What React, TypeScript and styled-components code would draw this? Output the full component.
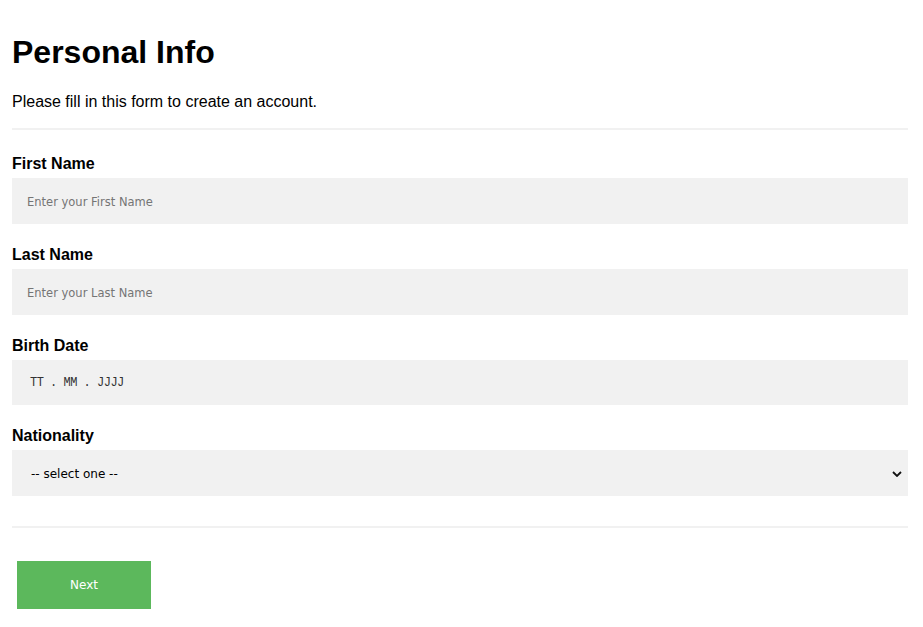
import React from "react";
import styled, { createGlobalStyle } from "styled-components";

const Global = createGlobalStyle`
  html, body { margin: 0; background: #fff; }
  body { font-family: "Liberation Sans", Arial, sans-serif; color: #000; }
  * { box-sizing: border-box; }
`;

const fields = [
  { label: "First Name", placeholder: "Enter your First Name" },
  { label: "Last Name", placeholder: "Enter your Last Name" },
];

export default function App() {
  return (
    <>
      <Global />
      <Page>
        <Title>Personal Info</Title>
        <Intro>Please fill in this form to create an account.</Intro>
        <Rule />
        <Fields>
          {fields.map((f) => (
            <Field key={f.label}>
              <Label>{f.label}</Label>
              <TextInput type="text" placeholder={f.placeholder} />
            </Field>
          ))}
          <Field>
            <Label>Birth Date</Label>
            <DateBox>TT . MM . JJJJ</DateBox>
          </Field>
          <Field>
            <Label>Nationality</Label>
            <SelectWrap>
              <Select defaultValue="">
                <option value="">-- select one --</option>
                <option value="de">German</option>
                <option value="at">Austrian</option>
                <option value="ch">Swiss</option>
              </Select>
              <Chevron viewBox="0 0 10 6" width="10" height="6">
                <path d="M1 1l4 4 4-4" fill="none" stroke="#111" strokeWidth="1.8" />
              </Chevron>
            </SelectWrap>
          </Field>
        </Fields>
        <Rule $gap={30} />
        <NextButton type="button">Next</NextButton>
      </Page>
    </>
  );
}

let Page = styled.div`
  padding: 34px 15px 20px 12px;
  display: flex;
  flex-direction: column;
`;

let Title = styled.h1`
  margin: 0;
  font-size: 32px;
  line-height: 37px;
  font-weight: 700;
`;

let Intro = styled.p`
  margin: 22px 0 0;
  font-size: 16px;
  line-height: 18px;
`;

let Rule = styled.hr<{ $gap?: number }>`
  margin: ${({ $gap }) => $gap ?? 17}px 0 0;
  height: 2px;
  border: none;
  background: #f1f1f1;
`;

let Fields = styled.div`
  display: flex;
  flex-direction: column;
  gap: 22px;
  margin-top: 25px;
`;

let Field = styled.div`
  display: flex;
  flex-direction: column;
  gap: 5px;
`;

let Label = styled.label`
  font-size: 16px;
  line-height: 18px;
  font-weight: 700;
`;

let TextInput = styled.input`
  height: 46px;
  border: none;
  outline: none;
  background: #f1f1f1;
  padding: 1px 15px 0;
  font-family: "DejaVu Sans", Tahoma, sans-serif;
  font-size: 11.5px;
  color: #000;
  &::placeholder {
    color: #757575;
  }
`;

let DateBox = styled.div`
  height: 45px;
  background: #f1f1f1;
  display: flex;
  align-items: center;
  padding: 1px 18px 0;
  font-family: "Liberation Mono", "Courier New", monospace;
  font-size: 12px;
  letter-spacing: -0.5px;
  color: #333;
  white-space: pre;
`;

let SelectWrap = styled.div`
  position: relative;
`;

let Select = styled.select`
  width: 100%;
  height: 46px;
  appearance: none;
  border: none;
  outline: none;
  background: #f1f1f1;
  padding: 2px 15px 0 19px;
  font-family: "DejaVu Sans", Tahoma, sans-serif;
  font-size: 12px;
  color: #000;
`;

let Chevron = styled.svg`
  position: absolute;
  right: 6px;
  top: 21px;
  pointer-events: none;
`;

let NextButton = styled.button`
  align-self: flex-start;
  margin: 33px 0 0 5px;
  width: 134px;
  height: 48px;
  border: none;
  background: #5cb85c;
  color: #fff;
  font-family: "DejaVu Sans", Tahoma, sans-serif;
  font-size: 12px;
  cursor: pointer;
`;
